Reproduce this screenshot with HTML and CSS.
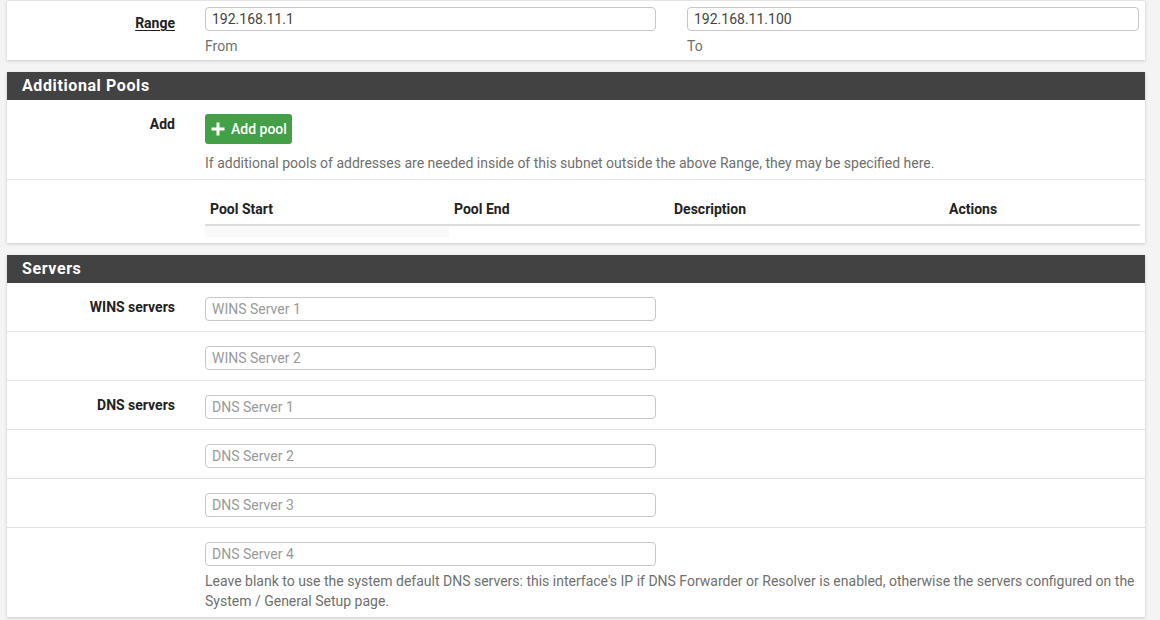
FILE: index.html
```html
<!DOCTYPE html>
<html>
<head>
<meta charset="utf-8">
<link rel="stylesheet" href="styles.css">
</head>
<body>
<div class="panel panel-first">
  <div class="row row-range">
    <div class="label label-range"><span class="u">Range</span></div>
    <div class="col">
      <input class="input" type="text" value="192.168.11.1">
      <div class="help">From</div>
    </div>
    <div class="col col-second">
      <input class="input input-wide" type="text" value="192.168.11.100">
      <div class="help">To</div>
    </div>
  </div>
</div>

<div class="panel">
  <div class="panel-heading">Additional Pools</div>
  <div class="row row-add">
    <div class="label">Add</div>
    <div class="col col-full">
      <button class="btn-success" type="button"><svg class="plus" width="14" height="14" viewBox="0 0 14 14"><path d="M5.5 0.5h3v5h5v3h-5v5h-3v-5h-5v-3h5z" fill="#fff"/></svg>Add pool</button>
      <div class="help help-add">If additional pools of addresses are needed inside of this subnet outside the above Range, they may be specified here.</div>
    </div>
  </div>
  <div class="row row-table">
    <div class="label"></div>
    <table class="pools">
      <thead>
        <tr><th class="c1">Pool Start</th><th class="c2">Pool End</th><th class="c3">Description</th><th class="c4">Actions</th></tr>
      </thead>
      <tbody>
        <tr><td class="empty"></td><td class="blank"></td><td class="blank"></td><td class="blank"></td></tr>
      </tbody>
    </table>
  </div>
</div>

<div class="panel">
  <div class="panel-heading">Servers</div>
  <div class="row row-srv">
    <div class="label">WINS servers</div>
    <div class="col"><input class="input" type="text" placeholder="WINS Server 1"></div>
  </div>
  <div class="row row-srv">
    <div class="label"></div>
    <div class="col"><input class="input" type="text" placeholder="WINS Server 2"></div>
  </div>
  <div class="row row-srv">
    <div class="label">DNS servers</div>
    <div class="col"><input class="input" type="text" placeholder="DNS Server 1"></div>
  </div>
  <div class="row row-srv">
    <div class="label"></div>
    <div class="col"><input class="input" type="text" placeholder="DNS Server 2"></div>
  </div>
  <div class="row row-srv">
    <div class="label"></div>
    <div class="col"><input class="input" type="text" placeholder="DNS Server 3"></div>
  </div>
  <div class="row row-srv row-last">
    <div class="label"></div>
    <div class="col col-full">
      <input class="input" type="text" placeholder="DNS Server 4">
      <div class="help help-dns">Leave blank to use the system default DNS servers: this interface's IP if DNS Forwarder or Resolver is enabled, otherwise the servers configured on the System / General Setup page.</div>
    </div>
  </div>
</div>
</body>
</html>
```

FILE: styles.css
```css
* { box-sizing: border-box; }
html, body { margin: 0; padding: 0; }
body {
  background: #f4f4f4;
  font-family: Roboto, "Liberation Sans", Arial, sans-serif;
  font-size: 14px;
  line-height: 20px;
  color: #222;
  width: 1160px;
  height: 620px;
  overflow: hidden;
}
.panel {
  width: 1138px;
  margin: 0 0 12px 7px;
  background: #fff;
  box-shadow: 0 1px 3px rgba(0,0,0,0.18);
}
.panel-first {
  border-top: 1px solid #e4e4e4;
}
.panel-heading {
  background: #424242;
  color: #fff;
  font-weight: 700;
  font-size: 16px;
  letter-spacing: 0.6px;
  height: 28px;
  line-height: 28px;
  padding-left: 15px;
}
.row {
  display: flex;
  align-items: flex-start;
  border-bottom: 1px solid #e2e2e2;
}
.row:last-child { border-bottom: 0; }
.label {
  width: 168px;
  flex: none;
  margin-right: 30px;
  text-align: right;
  font-weight: 700;
  color: #222;
}
.u { text-decoration: underline; text-underline-offset: 2px; }
.col { width: 451px; flex: none; }
.col-second { margin-left: 31px; width: 452px; }
.col-full { width: 935px; }
.input {
  display: block;
  width: 451px;
  height: 24px;
  border: 1px solid #c8c8c8;
  border-radius: 4px;
  padding: 0 6px;
  font-family: Roboto, "Liberation Sans", Arial, sans-serif;
  font-size: 14px;
  color: #444;
  background: #fff;
  outline: none;
}
.input-wide { width: 452px; }
.input::placeholder { color: #9a9a9a; }
.help { color: #6f6f6f; }

.row-range { padding: 6px 0 5px; height: 59px; }
.label-range { padding-top: 6px; }
.row-range .help { margin-top: 5px; }

.row-add { padding: 14px 0 6px; }
.row-add .label { padding-top: 0; line-height: 20px; }
.btn-success {
  display: inline-flex;
  align-items: center;
  height: 30px;
  width: 87px;
  padding: 0 0 0 6px;
  background: #43a047;
  color: #fff;
  border: 0;
  border-radius: 3px;
  font-family: Roboto, "Liberation Sans", Arial, sans-serif;
  font-size: 14px;
  font-weight: 500;
  cursor: pointer;
}
.plus { margin-right: 6px; flex: none; }
.help-add { margin-top: 9px; }

.row-table { padding: 19px 0 6px; }
.pools {
  width: 935px;
  border-collapse: collapse;
  table-layout: fixed;
}
.pools th {
  text-align: left;
  font-weight: 700;
  padding: 0 5px 5px;
  line-height: 20px;
  border-bottom: 2px solid #dcdcdc;
  color: #222;
}
.c1 { width: 244px; }
.c2 { width: 220px; }
.c3 { width: 275px; }
.c4 { width: 196px; }
.pools td { height: 12px; padding: 0; }
.pools td.empty { background: #f9f9f9; }

.row-srv { padding: 14px 0 10px; height: 49px; }
.row-srv .label { padding-top: 0; }
.row-last { height: auto; padding-bottom: 6px; }
.help-dns { margin-top: 5px; width: 935px; }
```
